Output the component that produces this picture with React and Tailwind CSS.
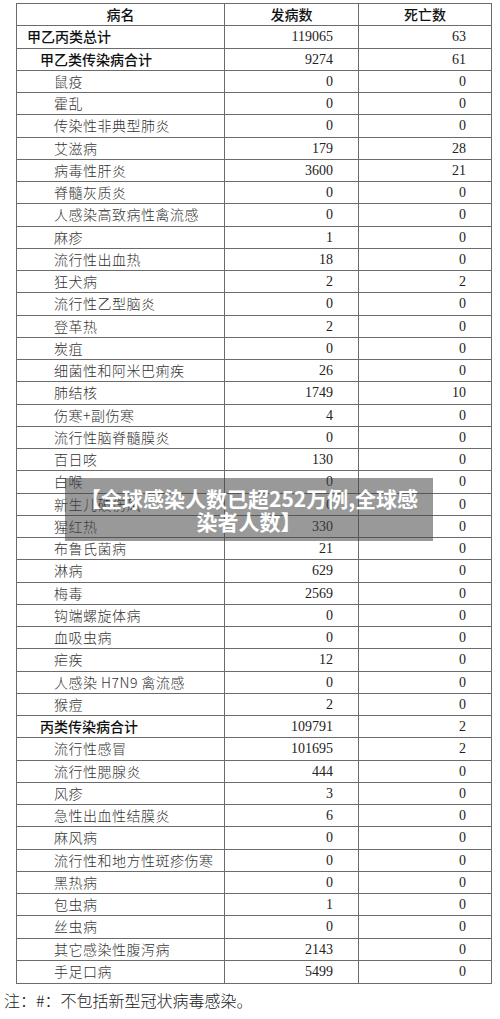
import React from 'react';

const rows = [
  { name: '甲乙丙类总计', a: '119065', b: '63', level: 0 },
  { name: '甲乙类传染病合计', a: '9274', b: '61', level: 1 },
  { name: '鼠疫', a: '0', b: '0' },
  { name: '霍乱', a: '0', b: '0' },
  { name: '传染性非典型肺炎', a: '0', b: '0' },
  { name: '艾滋病', a: '179', b: '28' },
  { name: '病毒性肝炎', a: '3600', b: '21' },
  { name: '脊髓灰质炎', a: '0', b: '0' },
  { name: '人感染高致病性禽流感', a: '0', b: '0' },
  { name: '麻疹', a: '1', b: '0' },
  { name: '流行性出血热', a: '18', b: '0' },
  { name: '狂犬病', a: '2', b: '2' },
  { name: '流行性乙型脑炎', a: '0', b: '0' },
  { name: '登革热', a: '2', b: '0' },
  { name: '炭疽', a: '0', b: '0' },
  { name: '细菌性和阿米巴痢疾', a: '26', b: '0' },
  { name: '肺结核', a: '1749', b: '10' },
  { name: '伤寒+副伤寒', a: '4', b: '0' },
  { name: '流行性脑脊髓膜炎', a: '0', b: '0' },
  { name: '百日咳', a: '130', b: '0' },
  { name: '白喉', a: '0', b: '0' },
  { name: '新生儿破伤风', a: '0', b: '0' },
  { name: '猩红热', a: '330', b: '0' },
  { name: '布鲁氏菌病', a: '21', b: '0' },
  { name: '淋病', a: '629', b: '0' },
  { name: '梅毒', a: '2569', b: '0' },
  { name: '钩端螺旋体病', a: '0', b: '0' },
  { name: '血吸虫病', a: '0', b: '0' },
  { name: '疟疾', a: '12', b: '0' },
  { name: '人感染 H7N9 禽流感', a: '0', b: '0' },
  { name: '猴痘', a: '2', b: '0' },
  { name: '丙类传染病合计', a: '109791', b: '2', level: 1 },
  { name: '流行性感冒', a: '101695', b: '2' },
  { name: '流行性腮腺炎', a: '444', b: '0' },
  { name: '风疹', a: '3', b: '0' },
  { name: '急性出血性结膜炎', a: '6', b: '0' },
  { name: '麻风病', a: '0', b: '0' },
  { name: '流行性和地方性斑疹伤寒', a: '0', b: '0' },
  { name: '黑热病', a: '0', b: '0' },
  { name: '包虫病', a: '1', b: '0' },
  { name: '丝虫病', a: '0', b: '0' },
  { name: '其它感染性腹泻病', a: '2143', b: '0' },
  { name: '手足口病', a: '5499', b: '0' },
];

const cjk = "font-['Noto_Sans_CJK_SC',sans-serif]";
const num = "font-['Liberation_Serif','Noto_Sans_CJK_SC',serif]";

function Row({ r }) {
  const nameCls =
    r.level === 0
      ? 'pl-[10px] font-medium text-[#111]'
      : r.level === 1
      ? 'pl-[23px] font-medium text-[#111]'
      : 'pl-[37px] font-light text-[#333] tracking-[0.5px]';
  return (
    <div className="grid grid-cols-[208px_134px_1fr] h-[22.25px] border-b border-[#6b6b6b] last:border-b-0">
      <div className={`flex items-center border-r border-[#6b6b6b] text-[14px] ${cjk} ${nameCls}`}>
        {r.name}
      </div>
      <div className={`flex items-center justify-end pr-[25px] border-r border-[#6b6b6b] text-[14px] text-[#222] ${num}`}>
        {r.a}
      </div>
      <div className={`flex items-center justify-end pr-[25px] text-[14px] text-[#222] ${num}`}>
        {r.b}
      </div>
    </div>
  );
}

export default function App() {
  return (
    <div className="relative w-[500px] h-[1019px] bg-white overflow-hidden">
      <div className="pt-[3px] pl-[16px]">
        <div className="w-[476px] border border-[#6b6b6b]">
          <div className={`grid grid-cols-[208px_134px_1fr] h-[22.25px] border-b border-[#6b6b6b] text-[14px] font-medium text-[#111] ${cjk}`}>
            <div className="flex items-center justify-center border-r border-[#6b6b6b]">病名</div>
            <div className="flex items-center justify-center border-r border-[#6b6b6b]">发病数</div>
            <div className="flex items-center justify-center">死亡数</div>
          </div>
          {rows.map((r) => (
            <Row key={r.name} r={r} />
          ))}
        </div>
      </div>
      <div className={`pl-[4px] pt-[4px] text-[16px] text-[#222] font-light ${cjk}`}>
        注：#：不包括新型冠状病毒感染。
      </div>

      <div className="absolute left-[65px] top-[478px] w-[368px] h-[63px] bg-[rgba(70,70,70,0.55)] flex flex-col items-center justify-center">
        <span className={`text-white text-[21px] font-bold leading-[23px] ${cjk}`}>【全球感染人数已超252万例,全球感</span>
        <span className={`text-white text-[21px] font-bold leading-[23px] ${cjk}`}>染者人数】</span>
      </div>
    </div>
  );
}
